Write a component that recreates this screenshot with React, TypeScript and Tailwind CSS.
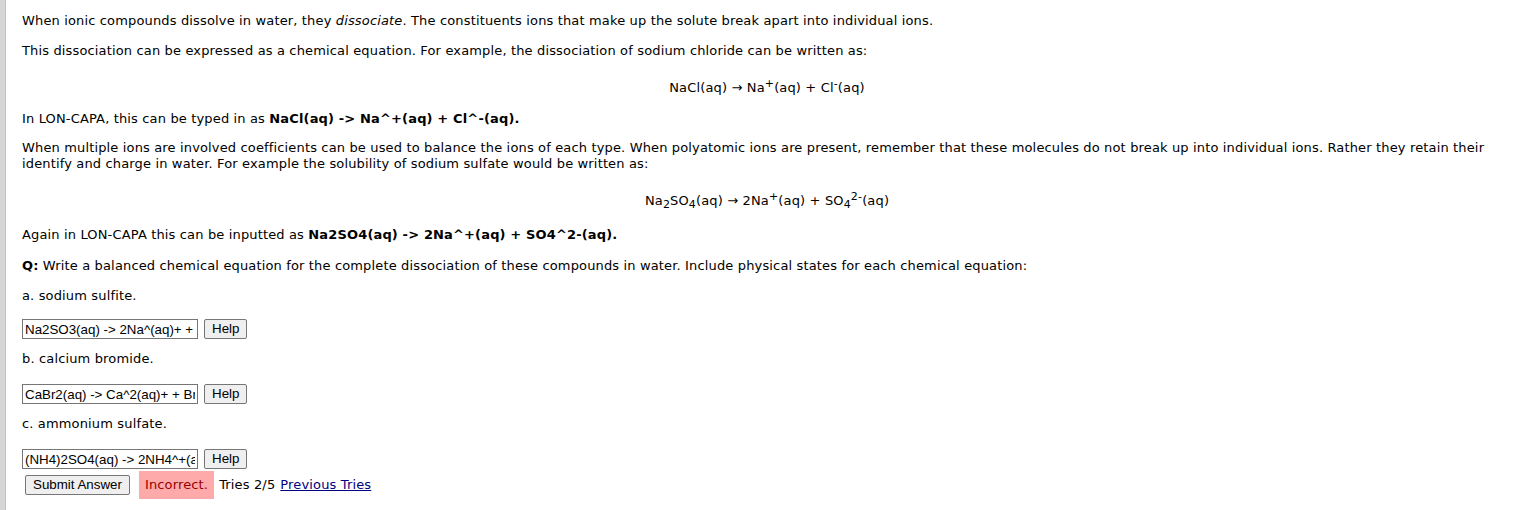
import React from 'react';

const verdana = { fontFamily: '"DejaVu Sans", Verdana, sans-serif' };

const AnswerField = ({ value }: { value: string }) => (
  <div className="flex items-center gap-[6px] h-5">
    <input
      readOnly
      defaultValue={value}
      className="w-[176px] h-5 border border-[#767676] px-[2px] text-[13.333px] tracking-normal text-black font-['Liberation_Sans',Arial,sans-serif] outline-none"
    />
    <button className="h-5 px-[7px] border border-[#767676] rounded-[2px] bg-[#efefef] text-[13.333px] tracking-normal text-black font-['Liberation_Sans',Arial,sans-serif] leading-none">
      Help
    </button>
  </div>
);

export default function App() {
  return (
    <div className="min-h-[510px] bg-white flex">
      <div className="w-[6px] bg-[#d6d6d6] border-r border-[#c4c4c4] shrink-0" />
      <div className="flex-1 pl-4 pr-[13px] text-[13px] tracking-[0.15px] leading-4 text-black" style={verdana}>
        <p className="mt-[13px]">
          When ionic compounds dissolve in water, they <i>dissociate</i>. The constituents ions that make up the solute break apart into individual ions.
        </p>
        <p className="mt-[14px]">
          This dissociation can be expressed as a chemical equation. For example, the dissociation of sodium chloride can be written as:
        </p>
        <div className="mt-[21px] text-center">
          NaCl(aq) → Na<sup className="text-[11px]">+</sup>(aq) + Cl<sup className="text-[11px]">-</sup>(aq)
        </div>
        <p className="mt-[15px]">
          In LON-CAPA, this can be typed in as <b>NaCl(aq) -&gt; Na^+(aq) + Cl^-(aq).</b>
        </p>
        <p className="mt-[13px]">
          When multiple ions are involved coefficients can be used to balance the ions of each type. When polyatomic ions are present, remember that these molecules do not break up into individual ions. Rather they retain their identify and charge in water. For example the solubility of sodium sulfate would be written as:
        </p>
        <div className="mt-[21px] text-center">
          Na<sub className="text-[11px]">2</sub>SO<sub className="text-[11px]">4</sub>(aq) → 2Na<sup className="text-[11px]">+</sup>(aq) + SO<sub className="text-[11px]">4</sub><sup className="text-[11px]">2-</sup>(aq)
        </div>
        <p className="mt-[18px]">
          Again in LON-CAPA this can be inputted as <b>Na2SO4(aq) -&gt; 2Na^+(aq) + SO4^2-(aq).</b>
        </p>
        <p className="mt-[15px]">
          <b>Q:</b> Write a balanced chemical equation for the complete dissociation of these compounds in water. Include physical states for each chemical equation:
        </p>
        <p className="mt-[14px]">a. sodium sulfite.</p>
        <div className="mt-[15px]">
          <AnswerField value="Na2SO3(aq) -> 2Na^(aq)+ + SO3^2-(aq)" />
        </div>
        <p className="mt-3">b. calcium bromide.</p>
        <div className="mt-[17px]">
          <AnswerField value="CaBr2(aq) -> Ca^2(aq)+ + Br^-(aq)" />
        </div>
        <p className="mt-3">c. ammonium sulfate.</p>
        <div className="mt-[17px]">
          <AnswerField value="(NH4)2SO4(aq) -> 2NH4^+(aq) + SO4^2-(aq)" />
        </div>
        <div className="flex items-center h-7 mt-[2px]">
          <button className="ml-[3px] h-5 px-[7px] border border-[#767676] rounded-[2px] bg-[#efefef] text-[13.333px] tracking-normal text-black font-['Liberation_Sans',Arial,sans-serif] leading-none">
            Submit Answer
          </button>
          <span className="ml-[9px] h-7 px-[6px] flex items-center bg-[#ffaaaa] text-[#990000]">Incorrect.</span>
          <span className="ml-[5px]">Tries 2/5</span>
          <a href="#" className="ml-[5px] text-[#000080] underline">Previous Tries</a>
        </div>
      </div>
    </div>
  );
}
